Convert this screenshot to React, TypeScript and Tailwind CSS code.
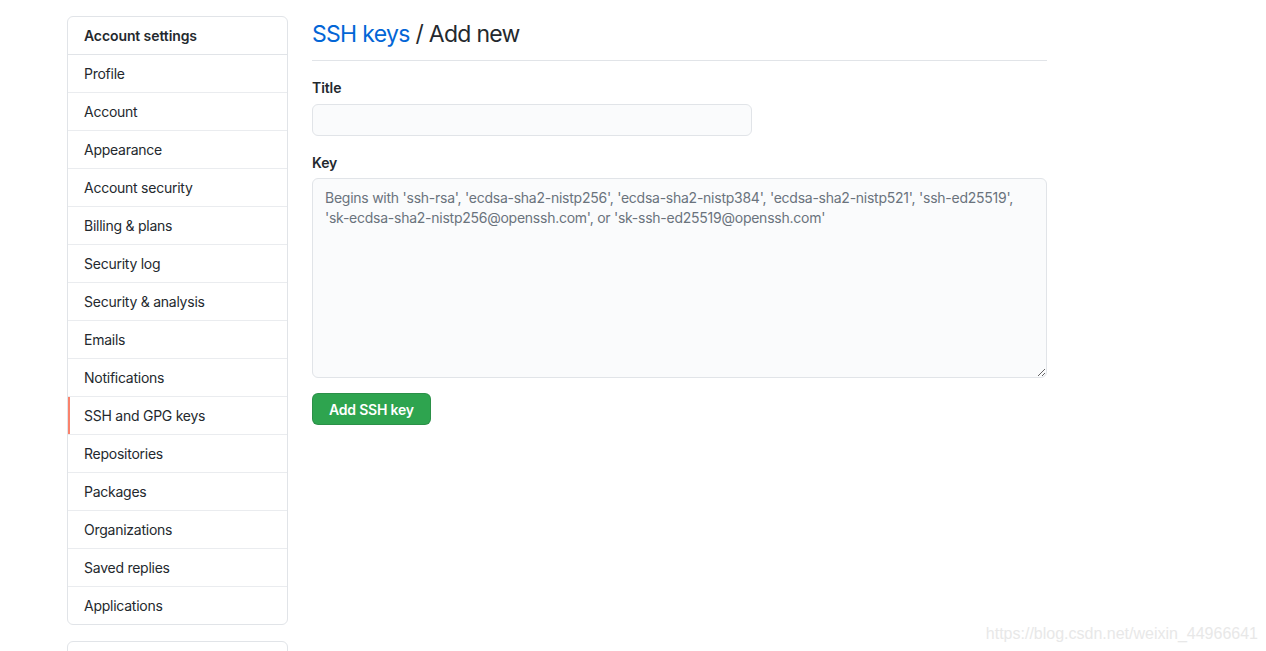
import React from "react";

const items = [
  "Profile",
  "Account",
  "Appearance",
  "Account security",
  "Billing & plans",
  "Security log",
  "Security & analysis",
  "Emails",
  "Notifications",
  "SSH and GPG keys",
  "Repositories",
  "Packages",
  "Organizations",
  "Saved replies",
  "Applications",
];

export default function App() {
  return (
    <div
      className="relative h-[651px] overflow-hidden bg-white text-[#24292e] text-[14px] leading-[1.5] tracking-[-0.25px]"
      style={{ fontFamily: "Inter, 'Liberation Sans', sans-serif" }}
    >
      <div className="flex gap-6 pl-[67px] pt-4">
        <div className="w-[221px] shrink-0 flex flex-col gap-4">
          <nav className="border border-[#e1e4e8] rounded-md overflow-hidden">
            <div className="px-4 py-2 font-semibold tracking-[-0.1px] border-b border-[#e1e4e8]">Account settings</div>
            {items.map((it, i) => {
              const active = it === "SSH and GPG keys";
              return (
                <div
                  key={it}
                  className={
                    "relative px-4 py-2 " +
                    (i < items.length - 1 ? "border-b border-[#eaecef]" : "")
                  }
                >
                  {active && <span className="absolute left-0 top-0 bottom-0 w-[2px] bg-[#f9826c]" />}
                  {it}
                </div>
              );
            })}
          </nav>
          <div className="border border-[#e1e4e8] rounded-md h-[60px]" />
        </div>
        <main className="w-[735px]">
          <div className="pb-2 border-b border-[#e1e4e8] mb-4">
            <h2 className="text-[23px] font-normal leading-[36px] tracking-[-0.7px]">
              <a className="text-[#0366d6]">SSH keys</a> / Add new
            </h2>
          </div>
          <div className="mb-4">
            <label className="block font-semibold mb-[6px] tracking-[-0.1px]">Title</label>
            <input
              className="w-[440px] h-8 px-3 bg-[#fafbfc] border border-[#e1e4e8] rounded-md outline-none"
              type="text"
            />
          </div>
          <div className="mb-[15px]">
            <label className="block font-semibold mb-[5px] tracking-[-0.1px]">Key</label>
            <textarea
              className="block w-[735px] h-[200px] px-3 py-[9px] bg-[#fafbfc] border border-[#e1e4e8] rounded-md outline-none leading-[20px] text-[14px] tracking-[-0.25px] placeholder:text-[#6a737d]"
              placeholder="Begins with 'ssh-rsa', 'ecdsa-sha2-nistp256', 'ecdsa-sha2-nistp384', 'ecdsa-sha2-nistp521', 'ssh-ed25519', 'sk-ecdsa-sha2-nistp256@openssh.com', or 'sk-ssh-ed25519@openssh.com'"
            />
          </div>
          <button className="h-8 px-4 bg-[#2ea44f] text-white font-semibold rounded-md border border-[rgba(27,31,35,0.15)] text-[14px] tracking-[-0.2px]">
            Add SSH key
          </button>
        </main>
      </div>
      <div
        className="absolute right-[8px] top-[622px] text-[16px] tracking-normal text-[#e8e8e8]"
        style={{ fontFamily: "'Liberation Sans', sans-serif" }}
      >
        https://blog.csdn.net/weixin_44966641
      </div>
    </div>
  );
}
